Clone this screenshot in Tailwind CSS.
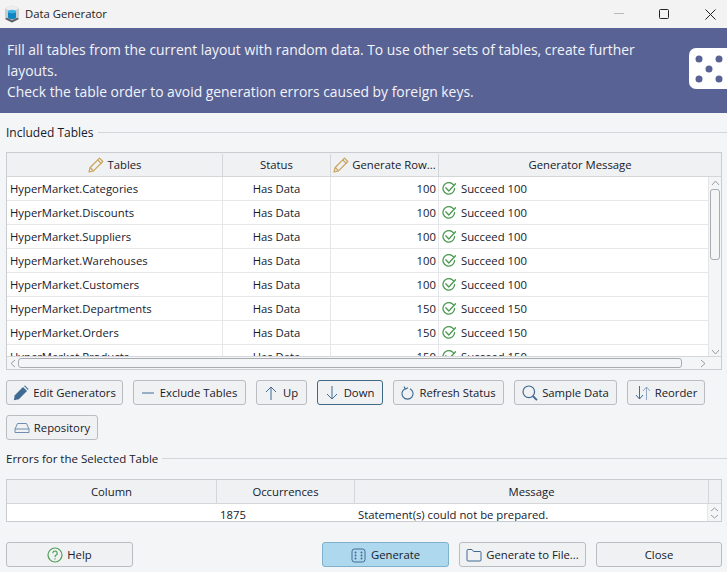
<!DOCTYPE html>
<html lang="en">
<head>
<meta charset="UTF-8">
<title>Data Generator</title>
<script src="https://cdn.jsdelivr.net/npm/@tailwindcss/browser@4"></script>
</head>
<body class="w-[727px] h-[572px] overflow-hidden bg-[#f4f5f7] text-[11.3px] text-[#16202b] font-['Open_Sans','Noto_Sans',sans-serif]">

<svg width="0" height="0" class="absolute">
  <defs>
    <g id="pencil" fill="none" stroke="#c9a45c" stroke-width="1.200" stroke-linejoin="round">
      <path d="M1 15l1.200-4.500L11.500 1.200l3.300 3.300-9.300 9.300z"/>
      <path d="M9.800 3l3.300 3.300M2.200 10.500l3.300 3.300"/>
    </g>
    <g id="ok" fill="none" stroke="#4a9a52" stroke-width="1.300" stroke-linecap="round" stroke-linejoin="round">
      <path d="M11.300 2.700A5.800 5.800 0 1 0 12.600 6.500"/>
      <path d="M3.800 5.800l3 3.200L13.500 1.800"/>
    </g>
  </defs>
</svg>

<!-- title bar -->
<div class="h-[28px] bg-[#f3f3f3] flex items-center">
  <svg class="ml-[4px] mr-[5px]" width="16" height="18" viewBox="0 0 16 18">
    <path d="M8 .5l7 3v10.500l-7 3.500-7-3.500V3.500z" fill="#c9cdd0"/>
    <path d="M8 .5l7 3-7 3-7-3z" fill="#eceeef"/>
    <ellipse cx="8" cy="6.500" rx="4" ry="1.700" fill="#35b4e4"/>
    <path d="M4 6.500v6c0 1 1.800 1.700 4 1.700s4-.7 4-1.700v-6c0 1-1.800 1.700-4 1.700s-4-.7-4-1.700z" fill="#0f86c4"/>
    <path d="M1 14l7 3.500 7-3.500-2-1.200-5 2.400-5-2.400z" fill="#5c6166"/>
  </svg>
  <span class="text-[#222]">Data Generator</span>
  <div class="ml-auto flex items-center">
    <svg class="mr-[35px]" width="10" height="2"><rect width="10" height="1" fill="#b8b8b8"/></svg>
    <svg class="mr-[36px]" width="10" height="10"><rect x=".5" y=".5" width="9" height="9" rx="1" fill="none" stroke="#222"/></svg>
    <svg class="mr-[11px]" width="11" height="11"><path d="M.5.500l10 10M10.500.500l-10 10" stroke="#222"/></svg>
  </div>
</div>

<!-- banner -->
<div class="h-[85px] bg-[#596294] flex items-start justify-between pl-[7px] text-[#f2f4fa] text-[13.900px] leading-[21px] pt-[11px]">
  <p class="w-[660px]">Fill all tables from the current layout with random data. To use other sets of tables, create further layouts.<br>Check the table order to avoid generation errors caused by foreign keys.</p>
  <svg class="mt-[9px]" width="38" height="41" viewBox="0 0 38 41">
    <rect width="50" height="41" rx="7" fill="#fff"/>
    <g fill="#596294"><circle cx="10" cy="11" r="3.500"/><circle cx="30" cy="11" r="3.500"/><circle cx="20" cy="21" r="3.500"/><circle cx="10" cy="31" r="3.500"/><circle cx="30" cy="31" r="3.500"/></g>
  </svg>
</div>

<!-- included tables -->
<div class="flex items-center h-[20px] mt-[9px] pl-[6px]">
  <span class="text-[12px] pt-[1px]">Included Tables</span>
  <div class="flex-1 h-px bg-[#d4d6d9] ml-[4px]"></div>
</div>

<div class="relative mx-[6px] mt-[10px] w-[716px] h-[218px] border border-[#c9ccd0] bg-white overflow-hidden">
  <div class="flex h-[24px] pt-[1px] bg-[#f0f1f3] border-b border-[#d4d6d9] text-center whitespace-nowrap">
    <div class="w-[216px] border-r border-[#d4d6d9] flex items-center justify-center gap-[4px]"><svg width="16" height="16" viewBox="0 0 16 16"><use href="#pencil"/></svg>Tables</div>
    <div class="w-[108px] border-r border-[#d4d6d9] flex items-center justify-center">Status</div>
    <div class="w-[108px] border-r border-[#d4d6d9] flex items-center justify-center gap-[3px]"><svg width="16" height="16" viewBox="0 0 16 16"><use href="#pencil"/></svg>Generate Row...</div>
    <div class="flex-1 flex items-center justify-center">Generator Message</div>
  </div>
  <div id="rows"></div>
  <!-- vertical scrollbar -->
  <div class="absolute right-0 top-[24px] w-[13px] h-[179px] bg-[#f4f5f7] border-l border-[#e4e5e7] flex flex-col items-center">
    <svg class="mt-[3px]" width="9" height="6"><path d="M1 5l3.500-4 3.500 4" fill="none" stroke="#9a9da1"/></svg>
    <div class="mt-[3px] w-[10px] h-[71px] rounded-[3px] border border-[#a8abaf] bg-[#f4f5f7]"></div>
    <svg class="mt-auto mb-[1px]" width="9" height="6"><path d="M1 1l3.500 4 3.500-4" fill="none" stroke="#9a9da1"/></svg>
  </div>
  <!-- horizontal scrollbar -->
  <div class="absolute left-0 bottom-0 w-full h-[13px] bg-[#f4f5f7] border-t border-[#d4d6d9] flex items-center">
    <svg class="ml-[3px]" width="6" height="9"><path d="M5 1L1 4.500 5 8" fill="none" stroke="#9a9da1"/></svg>
    <div class="ml-[2px] w-[664px] h-[10px] rounded-[3px] border border-[#a8abaf]"></div>
    <svg class="ml-auto mr-[15px]" width="6" height="9"><path d="M1 1l4 3.500L1 8" fill="none" stroke="#9a9da1"/></svg>
  </div>
</div>

<!-- table actions -->
<div class="flex flex-wrap gap-x-[10px] gap-y-[10px] ml-[6px] mt-[10px] w-[716px]">
  <button class="h-[25px] w-[117px] pt-[1px] flex items-center justify-center gap-[4px] rounded-[3px] border border-[#b9bcc0] bg-[#f0f1f3]">
    <svg width="16" height="16" viewBox="0 0 16 16"><path d="M.8 15.200l1-5L10 2l4 4-8.200 8.200z" fill="#3f6a94"/><path d="M11 1l1-.5 3.500 3.500-.5 1z" fill="#3f6a94"/></svg>Edit Generators</button>
  <button class="h-[25px] w-[113px] pt-[1px] flex items-center justify-center gap-[6px] rounded-[3px] border border-[#b9bcc0] bg-[#f0f1f3]">
    <svg width="12" height="12"><path d="M0 6h12" stroke="#3f6a94"/></svg>Exclude Tables</button>
  <button class="h-[25px] w-[51px] pt-[1px] flex items-center justify-center gap-[6px] rounded-[3px] border border-[#b9bcc0] bg-[#f0f1f3]">
    <svg width="12" height="14"><path d="M6 14V1M1 6l5-5 5 5" fill="none" stroke="#3f6a94"/></svg>Up</button>
  <button class="h-[25px] w-[66px] pt-[1px] flex items-center justify-center gap-[6px] rounded-[3px] border-[1.500px] border-[#3f6a85] bg-[#f0f1f3]">
    <svg width="12" height="14"><path d="M6 0v13M1 8l5 5 5-5" fill="none" stroke="#3f6a94"/></svg>Down</button>
  <button class="h-[25px] w-[111px] pt-[1px] flex items-center justify-center gap-[5px] rounded-[3px] border border-[#b9bcc0] bg-[#f0f1f3]">
    <svg width="13" height="14" viewBox="0 0 13 14"><path d="M4 2.700A5.500 5.500 0 1 0 9 2.700M3 .5l1.500 2.500L7 1.800" fill="none" stroke="#3f6a94" stroke-width="1.100"/></svg>Refresh Status</button>
  <button class="h-[25px] w-[103px] pt-[1px] flex items-center justify-center gap-[4px] rounded-[3px] border border-[#b9bcc0] bg-[#f0f1f3]">
    <svg width="16" height="16" viewBox="0 0 16 16"><circle cx="6.800" cy="6.800" r="5.800" fill="none" stroke="#3f6a94" stroke-width="1.200"/><path d="M10.800 11l4.200 4.200" stroke="#3f6a94" stroke-width="1.800"/></svg>Sample Data</button>
  <button class="h-[25px] w-[78px] pt-[1px] flex items-center justify-center gap-[4px] rounded-[3px] border border-[#b9bcc0] bg-[#f0f1f3]">
    <svg width="16" height="14" viewBox="0 0 16 14"><path d="M4.500 0v13M1 9l3.500 4L8 9" fill="none" stroke="#3f6a94"/><path d="M11.500 14V1M8 5l3.500-4L15 5" fill="none" stroke="#8fa9c2"/></svg>Reorder</button>
  <button class="h-[25px] w-[92px] pt-[1px] flex items-center justify-center gap-[4px] rounded-[3px] border border-[#b9bcc0] bg-[#f0f1f3]">
    <svg width="16" height="12" viewBox="0 0 16 12"><path d="M1 7l2.500-5.500h9L15 7v3.500H1zM1 7h14" fill="none" stroke="#6d8eb0"/></svg>Repository</button>
</div>

<!-- errors -->
<div class="flex items-center h-[20px] mt-[8px] pl-[6px]">
  <span class="text-[11.500px] pt-[1px]">Errors for the Selected Table</span>
  <div class="flex-1 h-px bg-[#d4d6d9] ml-[4px]"></div>
</div>

<div class="relative mx-[6px] mt-[11px] w-[716px] h-[43px] border border-[#c9ccd0] bg-white overflow-hidden">
  <div class="flex h-[24px] bg-[#f0f1f3] border-b border-[#d4d6d9] text-center">
    <div class="w-[210px] border-r border-[#d4d6d9] leading-[24px]">Column</div>
    <div class="w-[138px] border-r border-[#d4d6d9] leading-[24px]">Occurrences</div>
    <div class="w-[354px] border-r border-[#d4d6d9] leading-[24px]">Message</div>
  </div>
  <div class="flex h-[18px] leading-[22px]">
    <div class="w-[210px]"></div>
    <div class="w-[138px] pl-[3px]">1875</div>
    <div class="pl-[3px]">Statement(s) could not be prepared.</div>
  </div>
  <div class="absolute right-0 top-[24px] w-[14px] h-[18px] bg-[#f4f5f7] border-l border-[#e4e5e7] flex flex-col items-center justify-center gap-[2px]">
    <svg width="9" height="5"><path d="M1 4l3.500-3 3.500 3" fill="none" stroke="#9a9da1"/></svg>
    <svg width="9" height="5"><path d="M1 1l3.500 3 3.500-3" fill="none" stroke="#9a9da1"/></svg>
  </div>
</div>

<!-- footer buttons -->
<div class="flex ml-[6px] mt-[20px] w-[716px]">
  <button class="h-[25px] w-[127px] pt-[1px] flex items-center justify-center gap-[4px] rounded-[3px] border border-[#b9bcc0] bg-[#f0f1f3]">
    <svg width="16" height="16" viewBox="0 0 16 16"><circle cx="8" cy="8" r="7" fill="none" stroke="#4f9f57" stroke-width="1.200"/><path d="M5.800 6.200a2.200 2.200 0 1 1 3.400 1.900c-.8.500-1.200 1-1.200 1.900M8 11.300v1.200" fill="none" stroke="#4f9f57" stroke-width="1.200"/></svg>Help</button>
  <button class="ml-[189px] h-[25px] w-[127px] pt-[1px] flex items-center justify-center gap-[5px] rounded-[3px] border border-[#7fb0cc] bg-[#aed8ee]">
    <svg width="15" height="15" viewBox="0 0 15 15"><rect x="1" y="1" width="13" height="13" rx="2.500" fill="none" stroke="#3f6a94"/><g fill="#3f6a94"><circle cx="4.500" cy="4.500" r="1"/><circle cx="4.500" cy="7.500" r="1"/><circle cx="4.500" cy="10.500" r="1"/><circle cx="10.500" cy="4.500" r="1"/><circle cx="10.500" cy="7.500" r="1"/><circle cx="10.500" cy="10.500" r="1"/></g></svg>Generate</button>
  <button class="ml-[10px] h-[25px] w-[127px] pt-[1px] flex items-center justify-center gap-[4px] rounded-[3px] border border-[#b9bcc0] bg-[#f0f1f3]">
    <svg width="16" height="14" viewBox="0 0 16 14"><path d="M1 12V2.500A1 1 0 0 1 2 1.500h4l1.500 2H14a1 1 0 0 1 1 1V12a1 1 0 0 1-1 1H2a1 1 0 0 1-1-1z" fill="none" stroke="#3f6a94"/></svg>Generate to File...</button>
  <button class="ml-[10px] h-[25px] w-[126px] pt-[1px] rounded-[3px] border border-[#b9bcc0] bg-[#f0f1f3]">Close</button>
</div>

<script>
  const rows = [
    ['HyperMarket.Categories', 100],
    ['HyperMarket.Discounts', 100],
    ['HyperMarket.Suppliers', 100],
    ['HyperMarket.Warehouses', 100],
    ['HyperMarket.Customers', 100],
    ['HyperMarket.Departments', 150],
    ['HyperMarket.Orders', 150],
    ['HyperMarket.Products', 150],
  ];
  document.getElementById('rows').innerHTML = rows.map(([name, n]) => `
    <div class="flex h-[24px] border-b border-[#e6e7e9] leading-[23px]">
      <div class="w-[216px] border-r border-[#e6e7e9] pl-[3px]">${name}</div>
      <div class="w-[108px] border-r border-[#e6e7e9] text-center">Has Data</div>
      <div class="w-[108px] border-r border-[#e6e7e9] text-right pr-[2px]">${n}</div>
      <div class="flex-1 flex items-center pl-[3px] gap-[4px]"><svg width="15" height="14" viewBox="0 0 15 14"><use href="#ok"/></svg>Succeed ${n}</div>
    </div>`).join('');
</script>
</body>
</html>
